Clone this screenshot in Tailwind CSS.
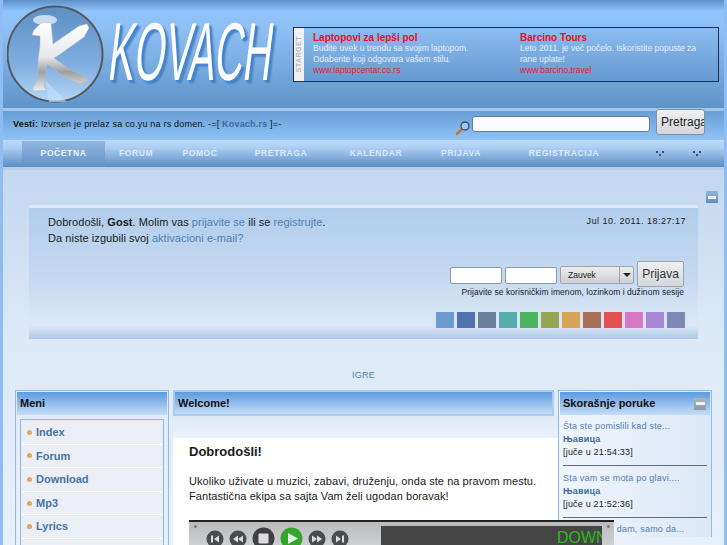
<!DOCTYPE html>
<html lang="en">
<head>
    <meta charset="UTF-8">
    <title>Kovach</title>
    <script src="https://cdn.jsdelivr.net/npm/@tailwindcss/browser@4"></script>
</head>
<body class="h-[545px] overflow-hidden font-['Liberation_Sans',sans-serif] text-[12px] text-[#222]">
<div class="h-[545px] overflow-hidden border-x-[3px] border-[#8ebcf3] bg-[linear-gradient(#c2d7f0_170px,#dde9f7_340px,#e8f0fa_545px)]">

    <!-- Header -->
    <header class="flex h-[108px] items-start bg-[linear-gradient(#5e90c6_0,#8fc4fa_11px,#8ebff4_30px,#5f94c9_108px)]">
        <svg width="107" height="106" viewBox="0 0 107 106" class="mt-[2px] ml-[4px] shrink-0">
            <defs>
                <linearGradient id="ball" x1="0" y1="0" x2="0" y2="1">
                    <stop offset="0" stop-color="#5d8fc4"/>
                    <stop offset="0.6" stop-color="#7fade0"/>
                    <stop offset="1" stop-color="#b4d6f5"/>
                </linearGradient>
                <linearGradient id="fig" x1="0" y1="0" x2="0" y2="1">
                    <stop offset="0" stop-color="#ffffff"/>
                    <stop offset="0.5" stop-color="#e6e8ea"/>
                    <stop offset="0.72" stop-color="#9b9fa3"/>
                    <stop offset="1" stop-color="#eeeeee"/>
                </linearGradient>
            </defs>
            <circle cx="48" cy="52" r="47.5" fill="url(#ball)" stroke="#55585c" stroke-width="2"/>
            <path d="M38 78 L60 100 L42 100 Z" fill="#c4dff7" opacity="0.6"/>
            <ellipse cx="38" cy="18" rx="12" ry="5" fill="#dbe9f7" opacity="0.85"/>
            <path d="M34 21 L44 21 L46 42 L72 24 L80 22 L82 26 L77 35 L52 53 L47 56 L62 67 L79 75 L81 79 L73 82 L59 76 L44 65 L40 62 L38 76 L37 85 L40 88 L27 89 L26 86 L31 76 L31 58 L33 44 L33 34 L25 33 L27 28 Z" fill="url(#fig)" stroke="#b8bcc0" stroke-width="0.5"/>
        </svg>
        <div class="mt-[5px] ml-[-4px] w-[181px] shrink-0">
            <span class="block origin-left text-[82px] leading-[94px] text-white [transform:skewX(-7deg)_scaleX(0.48)] [text-shadow:4px_2px_0_#3f86dc,7px_3px_3px_#4d7fb5]">KOVACH</span>
        </div>
        <!-- Sponsored links -->
        <div class="mt-[27px] ml-[2px] flex h-[55px] w-[426px] shrink-0 border border-[#20303f] bg-[linear-gradient(#8dbcf0,#659ad0)]">
            <div class="flex w-[10px] shrink-0 items-center justify-center bg-[#eef0f2]">
                <span class="-rotate-90 text-[7px] font-bold tracking-[0.5px] text-[#b5b8bb]">STARGET</span>
            </div>
            <div class="w-[216px] shrink-0 pt-[4px] pl-[9px] text-[8.5px] leading-[11px] text-[#e4eefa]">
                <div class="text-[10px] font-bold text-[#e8101c]">Laptopovi za lepši pol</div>
                <div>Budite uvek u trendu sa svojim laptopom.</div>
                <div>Odaberite koji odgovara vašem stilu.</div>
                <div class="text-[#e8202c]">www.laptopcentar.co.rs</div>
            </div>
            <div class="grow pt-[4px] pr-[8px] text-[8.5px] leading-[11px] text-[#e4eefa]">
                <div class="text-[10px] font-bold text-[#e8101c]">Barcino Tours</div>
                <div>Leto 2011. je već počelo. Iskoristite popuste za rane uplate!</div>
                <div class="text-[#e8202c]">www.barcino.travel</div>
            </div>
        </div>
    </header>

    <!-- News and search -->
    <div class="flex h-[32px] items-start border-t-[3px] border-[#a3c5ea] bg-[linear-gradient(#689dd5,#8fc3f8)]">
        <p class="mt-[7px] ml-[10px] text-[9px] leading-[12px] tracking-[0.2px] text-[#111]"><b>Vesti:</b> Izvrsen je prelaz sa co.yu na rs domen. -=[ <b class="text-[#3f6c9c]">Kovach.rs</b> ]=-</p>
        <div class="mr-[19px] ml-auto flex items-start">
            <svg width="16" height="16" viewBox="0 0 16 16" class="mt-[9px] mr-[1px]">
                <line x1="2" y1="14" x2="7" y2="9" stroke="#c4772a" stroke-width="2.5" stroke-linecap="round"/>
                <circle cx="10" cy="6" r="4" fill="#9cc7f0" stroke="#3a4a5a" stroke-width="1.3"/>
            </svg>
            <input type="text" class="mt-[5px] h-[16px] w-[178px] rounded-[3px] border border-[#5f7f9f] bg-[#fbfcff]">
            <button class="mt-[-2px] ml-[6px] h-[26px] w-[49px] overflow-hidden rounded-[3px] border border-[#7f93a6] bg-[linear-gradient(#f0f1f3,#d3d5d8)] pl-[4px] text-left text-[12px] whitespace-nowrap text-[#222]">Pretraga</button>
        </div>
    </div>

    <!-- Main nav -->
    <nav class="flex h-[27px] items-center bg-[linear-gradient(#bcdbfb,#aacdf3_30%,#5a8dc2)] pl-[19px] text-center text-[8.5px] font-bold tracking-[0.6px] text-[#dbe8f7]">
        <a class="flex h-[25px] w-[83px] items-center justify-center bg-[linear-gradient(#92b8e2,#6393c8)] text-[#f2f6fc]">POČETNA</a>
        <a class="w-[62px]">FORUM</a>
        <a class="w-[66px]">POMOĆ</a>
        <a class="w-[96px]">PRETRAGA</a>
        <a class="w-[94px]">KALENDAR</a>
        <a class="w-[76px]">PRIJAVA</a>
        <a class="w-[130px]">REGISTRACIJA</a>
        <svg width="10" height="7" class="ml-[26px]"><path d="M1 1h2v2H1zM7 1h2v2H7zM4 4h2v2H4z" fill="#3d5066"/></svg>
        <svg width="10" height="7" class="ml-[27px]"><path d="M1 1h2v2H1zM7 1h2v2H7zM4 4h2v2H4z" fill="#3d5066"/></svg>
    </nav>
    <div class="h-[3px] bg-[#b9cee4]"></div>

    <!-- Login panel -->
    <div class="flex h-[21px] justify-end pt-[21px] pr-[6px]">
        <div class="flex h-[12px] w-[12px] shrink-0 items-center justify-center rounded-[1px] bg-[linear-gradient(#92b6dc,#5d8cbd)]"><span class="h-[3px] w-[8px] bg-[#eef3f9]"></span></div>
    </div>
    <section class="mx-[26px] mt-[14px] h-[134px] border-t-[3px] border-[#dde9f7] bg-[linear-gradient(#b1cdec,#c5daf1_55%,#dbe7f6_88%,#dbe7f6_90%,#adc9e9)] px-[19px] text-[11px] text-[#1a1a1a]">
        <div class="flex items-start justify-between pt-[6px]">
            <p class="leading-[16px] tracking-[0.05px]">Dobrodošli, <b>Gost</b>. Molim vas <a class="text-[#4f80b4]">prijavite se</a> ili se <a class="text-[#4f80b4]">registrujte</a>.<br>Da niste izgubili svoj <a class="text-[#4f80b4]">aktivacioni e-mail?</a></p>
            <span class="mr-[-7px] text-[9px] leading-[14px] tracking-[0.5px]">Jul 10. 2011. 18:27:17</span>
        </div>
        <div class="mt-[15px] mr-[-5px] flex items-end justify-end">
            <input type="text" class="mb-[3px] h-[17px] w-[52px] rounded-[2px] border border-[#8b99a8] bg-white">
            <input type="text" class="mb-[3px] ml-[3px] h-[17px] w-[52px] rounded-[2px] border border-[#8b99a8] bg-white">
            <div class="mb-[3px] ml-[3px] flex h-[18px] w-[74px] items-center rounded-[2px] border border-[#9ca5ae] bg-[linear-gradient(#eceded,#cdd0d3)] text-[8.5px]">
                <span class="grow pl-[7px]">Zauvek</span>
                <span class="flex h-full w-[14px] items-center justify-center border-l border-[#9ca5ae]"><span class="h-0 w-0 border-x-[4px] border-t-[4px] border-x-transparent border-t-[#222]"></span></span>
            </div>
            <button class="ml-[3px] h-[26px] w-[47px] rounded-[2px] border border-[#9ca5ae] bg-[linear-gradient(#eff0f2,#d5d7da)] text-[12px] text-[#333]">Prijava</button>
        </div>
        <p class="mt-[-1px] mr-[-5px] text-right text-[8.5px] leading-[12px] tracking-[0.05px]">Prijavite se korisničkim imenom, lozinkom i dužinom sesije</p>
        <div class="mt-[14px] mr-[-6px] flex justify-end gap-[3px]">
            <span class="h-[16px] w-[18px] bg-[#6b9bcf]"></span>
            <span class="h-[16px] w-[18px] bg-[#5272ae]"></span>
            <span class="h-[16px] w-[18px] bg-[#6a7f99]"></span>
            <span class="h-[16px] w-[18px] bg-[#55aeac]"></span>
            <span class="h-[16px] w-[18px] bg-[#4cb35f]"></span>
            <span class="h-[16px] w-[18px] bg-[#94a652]"></span>
            <span class="h-[16px] w-[18px] bg-[#d9a355]"></span>
            <span class="h-[16px] w-[18px] bg-[#a8705a]"></span>
            <span class="h-[16px] w-[18px] bg-[#e35050]"></span>
            <span class="h-[16px] w-[18px] bg-[#d678c5]"></span>
            <span class="h-[16px] w-[18px] bg-[#a787d6]"></span>
            <span class="h-[16px] w-[18px] bg-[#7f88b5]"></span>
        </div>
    </section>

    <div class="mt-[29px] text-center text-[9px] leading-[14px] tracking-[0.3px] text-[#4f7fb0]">IGRE</div>

    <!-- Columns -->
    <div class="mt-[8px] ml-[12px] flex items-start">
        <!-- Left menu -->
        <aside class="h-[160px] w-[154px] shrink-0 border-x border-t border-[#8ebcea] p-[1px]">
            <h3 class="flex h-[23px] items-center bg-[linear-gradient(#5e9ade,#c5ddf7)] pl-[3px] text-[11px] font-bold text-[#111]">Meni</h3>
            <ul class="mx-[3px] mt-[4px] border-x border-t border-[#8ebcea] p-[1px] text-[11px] font-bold text-[#4773a6]">
                <li class="flex h-[23.6px] items-center gap-[4px] border-b border-white bg-[#ebeef4] pl-[5px]"><span class="h-[5px] w-[5px] rounded-full bg-[#dba864]"></span>Index</li>
                <li class="flex h-[23.6px] items-center gap-[4px] border-b border-white bg-[#ebeef4] pl-[5px]"><span class="h-[5px] w-[5px] rounded-full bg-[#dba864]"></span>Forum</li>
                <li class="flex h-[23.6px] items-center gap-[4px] border-b border-white bg-[#ebeef4] pl-[5px]"><span class="h-[5px] w-[5px] rounded-full bg-[#dba864]"></span>Download</li>
                <li class="flex h-[23.6px] items-center gap-[4px] border-b border-white bg-[#ebeef4] pl-[5px]"><span class="h-[5px] w-[5px] rounded-full bg-[#dba864]"></span>Mp3</li>
                <li class="flex h-[23.6px] items-center gap-[4px] border-b border-white bg-[#ebeef4] pl-[5px]"><span class="h-[5px] w-[5px] rounded-full bg-[#dba864]"></span>Lyrics</li>
                <li class="h-[24px] bg-[#ebeef4]"></li>
            </ul>
        </aside>

        <!-- Center -->
        <main class="relative z-10 ml-[4px] w-[385px] shrink-0">
            <h3 class="mr-[4px] flex h-[26px] items-center border-2 border-[#a9cbef] bg-[linear-gradient(#5e9ade,#c5ddf7)] pl-[3px] text-[11px] font-bold text-[#111]">Welcome!</h3>
            <div class="h-[22px] bg-[linear-gradient(#dfeaf7,#eaf1fa)]"></div>
            <div class="h-[120px] bg-white pt-[6px] pl-[16px]">
                <h2 class="text-[13px] leading-[16px] font-bold text-[#1a1a1a]">Dobrodošli!</h2>
                <p class="mt-[14px] text-[11px] leading-[15px] tracking-[0.06px] whitespace-nowrap text-[#1a1a1a]">Ukoliko uživate u muzici, zabavi, druženju, onda ste na pravom mestu.<br>Fantastična ekipa sa sajta Vam želi ugodan boravak!</p>
                <!-- Player -->
                <div class="relative mt-[16px] flex h-[40px] w-[425px] border-t-2 border-[#222] bg-[linear-gradient(#b9bbbd,#dcdcdc)] pt-[4px]">
                    <span class="absolute top-[3px] left-[5px] h-[3px] w-[3px] rounded-full bg-[#77797b]"></span>
                    <span class="absolute top-[3px] right-[4px] h-[3px] w-[3px] rounded-full bg-[#77797b]"></span>
                    <div class="flex w-[192px] shrink-0 items-start gap-[5px] pt-[1px] pl-[17px]">
                        <svg width="18" height="18" class="mt-[3px]"><circle cx="9" cy="9" r="8.500" fill="#4a4c4e"/><path d="M5 5.500h2v7H5zM13 5.500v7l-5-3.500z" fill="#ddd"/></svg>
                        <svg width="18" height="18" class="mt-[3px]"><circle cx="9" cy="9" r="8.500" fill="#4a4c4e"/><path d="M9 5.500v7l-5-3.500zM14 5.500v7l-5-3.500z" fill="#ddd"/></svg>
                        <svg width="23" height="23"><circle cx="11.500" cy="11.500" r="11" fill="#3f4143"/><rect x="6.500" y="6.500" width="10" height="10" rx="1" fill="#ddd"/></svg>
                        <svg width="23" height="23"><circle cx="11.500" cy="11.500" r="11" fill="#35a52a"/><path d="M8 6l10 5.500-10 5.500z" fill="#e6f2e2"/></svg>
                        <svg width="18" height="18" class="mt-[3px]"><circle cx="9" cy="9" r="8.500" fill="#4a4c4e"/><path d="M4 5.500v7l5-3.500zM9 5.500v7l5-3.500z" fill="#ddd"/></svg>
                        <svg width="18" height="18" class="mt-[3px]"><circle cx="9" cy="9" r="8.500" fill="#4a4c4e"/><path d="M5 5.500v7l5-3.500zM11 5.500h2v7h-2z" fill="#ddd"/></svg>
                    </div>
                    <div class="h-[40px] w-[221px] shrink-0 overflow-hidden bg-[#454545] pt-[3px] pl-[176px] text-[16px] leading-[18px] whitespace-nowrap text-[#2fb81e]">DOWNLOAD</div>
                </div>
            </div>
        </main>

        <!-- Recent posts -->
        <aside class="w-[154px] shrink-0 border-x border-t border-[#8ebcea] bg-[linear-gradient(90deg,#f0f5fb,#dce8f6)] p-[1px] text-[9px] leading-[13px] tracking-[0.2px]">
            <div class="flex h-[23px] items-center justify-between bg-[linear-gradient(#5e9ade,#c5ddf7)] pr-[4px] pl-[3px] text-[11px] font-bold tracking-normal text-[#111]">
                <h3>Skorašnje poruke</h3>
                <span class="flex h-[12px] w-[12px] items-center justify-center bg-[linear-gradient(#adb3ba,#8f9aa6)]"><span class="h-[3px] w-[9px] bg-[#eef1f4]"></span></span>
            </div>
            <div class="mx-[3px] mt-[5px] h-[46px] border-b border-[#666c72]">
                <a class="block text-[#4f80b4]">Šta ste pomislili kad ste...</a>
                <a class="block font-bold text-[#3f6c9c]">Њавица</a>
                <span class="block text-[#222]">[juče u 21:54:33]</span>
            </div>
            <div class="mx-[3px] mt-[6px] h-[46px] border-b border-[#666c72]">
                <a class="block text-[#4f80b4]">Sta vam se mota po glavi....</a>
                <a class="block font-bold text-[#3f6c9c]">Њавица</a>
                <span class="block text-[#222]">[juče u 21:52:36]</span>
            </div>
            <div class="mx-[3px] mt-[5px]">
                <a class="block whitespace-nowrap text-[#4f80b4]">Ne mogu da dam, samo da...</a>
            </div>
        </aside>
    </div>
</div>
</body>
</html>
